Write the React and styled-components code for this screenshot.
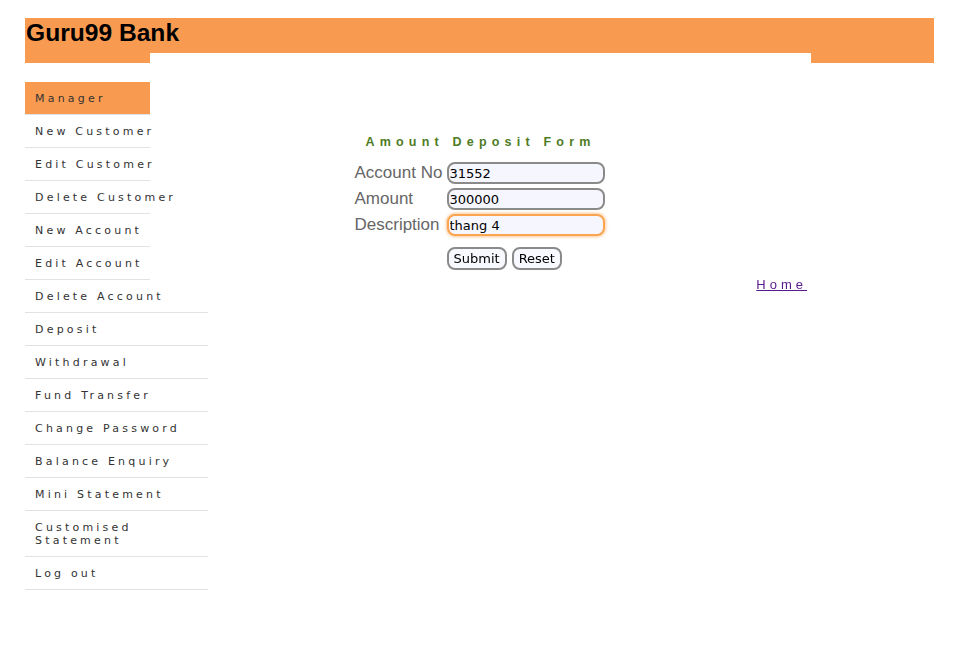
import React from 'react';
import styled, { createGlobalStyle } from 'styled-components';

const Global = createGlobalStyle`
  body {
    margin: 0;
    background: #fff;
    font-family: "Liberation Sans", Arial, sans-serif;
  }
`

const ORANGE = '#f89b51'

const Page = styled.div`
  width: 909px;
  margin: 18px 0 0 25px;
`

const Header = styled.div`
  display: flex;
  flex-direction: column;
`

const Banner = styled.div`
  height: 35px;
  background: ${ORANGE};
  padding-left: 1px;
`

const Title = styled.h2`
  margin: 0;
  font-size: 24.6px;
  line-height: 29px;
  font-weight: bold;
  color: #000;
`

const Strip = styled.div`
  display: flex;
  height: 10px;
`

const Tab = styled.div`
  width: ${p => p.w}px;
  background: ${ORANGE};
`

const Gap = styled.div`
  flex: 1;
  background: #fff;
`

const Body = styled.div`
  display: grid;
  grid-template-columns: 125px 661px 1fr;
  margin-top: 19px;
`

const Menu = styled.ul`
  list-style: none;
  margin: 0;
  padding: 0;
`

const Item = styled.li`
  width: ${p => (p.wide ? 183 : 125)}px;
  box-sizing: border-box;
  padding: 10px 10px 9px 10px;
  border-bottom: 1px solid #e2e2e2;
  background: ${p => (p.active ? ORANGE : 'transparent')};
  font-family: "DejaVu Sans", Verdana, sans-serif;
  font-size: 11px;
  line-height: 13px;
  letter-spacing: 3.2px;
  color: #333;
  white-space: ${p => (p.wide ? 'normal' : 'nowrap')};
`

const Main = styled.div`
  display: flex;
  flex-direction: column;
  align-items: center;
`

const FormTitle = styled.h2`
  margin: 53px 0 0 0;
  font-size: 12.5px;
  line-height: 14px;
  font-weight: bold;
  letter-spacing: 5.2px;
  color: #4e7b24;
`

const Form = styled.form`
  display: grid;
  grid-template-columns: 92px 158px;
  row-gap: 4px;
  align-items: center;
  margin: 13px 2px 0 0;
`

const Label = styled.label`
  font-size: 17px;
  color: #666;
  white-space: nowrap;
`

const Input = styled.input`
  box-sizing: border-box;
  width: 158px;
  height: 22px;
  margin: 0;
  padding: 0 1px;
  border: 2px solid #8a8a8a;
  border-radius: 8px;
  background: #f6f6ff;
  font-family: "DejaVu Sans", Verdana, sans-serif;
  font-size: 13px;
  color: #000;
  outline: none;

  &:focus {
    border-color: #fba552;
    box-shadow: 0 0 3px 1px rgba(251, 165, 82, 0.6);
  }
`

const Buttons = styled.div`
  grid-column: 2;
  display: flex;
  gap: 5px;
  margin-top: 7px;
`

const Button = styled.button`
  box-sizing: border-box;
  height: 23px;
  margin: 0;
  padding: 0 5px;
  border: 2px solid #8a8a8a;
  border-radius: 8px;
  background: #f8f8ff;
  font-family: "DejaVu Sans", Verdana, sans-serif;
  font-size: 13px;
  color: #000;
`

const HomeRow = styled.div`
  align-self: stretch;
  text-align: right;
  padding-right: 4px;
  margin-top: 5px;
`

const HomeLink = styled.a`
  font-size: 13px;
  line-height: 14px;
  letter-spacing: 4px;
  color: #551a8b;
  text-decoration: underline;
`

const links = [
  'New Customer', 'Edit Customer', 'Delete Customer', 'New Account', 'Edit Account',
  'Delete Account', 'Deposit', 'Withdrawal', 'Fund Transfer', 'Change Password',
  'Balance Enquiry', 'Mini Statement', 'Customised Statement', 'Log out'
]

const App = () => {
  return (
    <Page>
      <Global />
      <Header>
        <Banner>
          <Title>Guru99 Bank</Title>
        </Banner>
        <Strip>
          <Tab w={125} />
          <Gap />
          <Tab w={123} />
        </Strip>
      </Header>

      <Body>
        <Menu>
          <Item active>Manager</Item>
          {links.map((l, i) => (
            <Item key={l} wide={i >= 5}>{l}</Item>
          ))}
        </Menu>

        <Main>
          <FormTitle>Amount Deposit Form</FormTitle>
          <Form onSubmit={e => e.preventDefault()}>
            <Label>Account No</Label>
            <Input defaultValue="31552" />
            <Label>Amount</Label>
            <Input defaultValue="300000" />
            <Label>Description</Label>
            <Input defaultValue="thang 4" autoFocus />
            <Buttons>
              <Button type="submit">Submit</Button>
              <Button type="reset">Reset</Button>
            </Buttons>
          </Form>
          <HomeRow>
            <HomeLink href="#">Home</HomeLink>
          </HomeRow>
        </Main>
        <div />
      </Body>
    </Page>
  );
};

export default App;
